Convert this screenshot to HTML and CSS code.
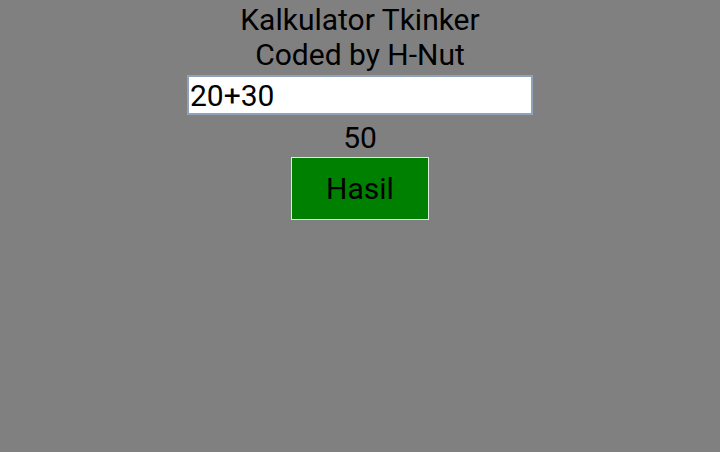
FILE: index.html
```html
<!DOCTYPE html>
<html>
<head>
<meta charset="utf-8">
<link rel="stylesheet" href="styles.css">
</head>
<body>
<div class="app">
  <div class="title">Kalkulator Tkinker</div>
  <div class="subtitle">Coded by H-Nut</div>
  <input class="entry" type="text" value="20+30">
  <div class="result">50</div>
  <button class="btn">Hasil</button>
</div>
</body>
</html>
```
FILE: styles.css
```css
html, body {
  margin: 0;
  padding: 0;
  background: #808080;
  height: 100%;
}
.app {
  display: flex;
  flex-direction: column;
  align-items: center;
  font-family: Roboto, "Liberation Sans", sans-serif;
  font-size: 30px;
  color: #000;
  padding-top: 2px;
}
.title, .subtitle, .result {
  line-height: 35px;
  height: 35px;
}
.entry {
  margin-top: 3px;
  box-sizing: border-box;
  width: 346px;
  height: 40px;
  border: 2px solid #8ea3ba;
  background: #fff;
  padding: 0 0 0 1px;
  font-family: Roboto, "Liberation Sans", sans-serif;
  font-size: 30px;
  color: #000;
  outline: none;
}
.result {
  margin-top: 5px;
}
.btn {
  margin-top: 2px;
  box-sizing: border-box;
  width: 138px;
  height: 63px;
  background: #008000;
  border: 1px solid #dfeadf;
  font-family: Roboto, "Liberation Sans", sans-serif;
  font-size: 30px;
  color: #000;
  padding: 0;
}
```
